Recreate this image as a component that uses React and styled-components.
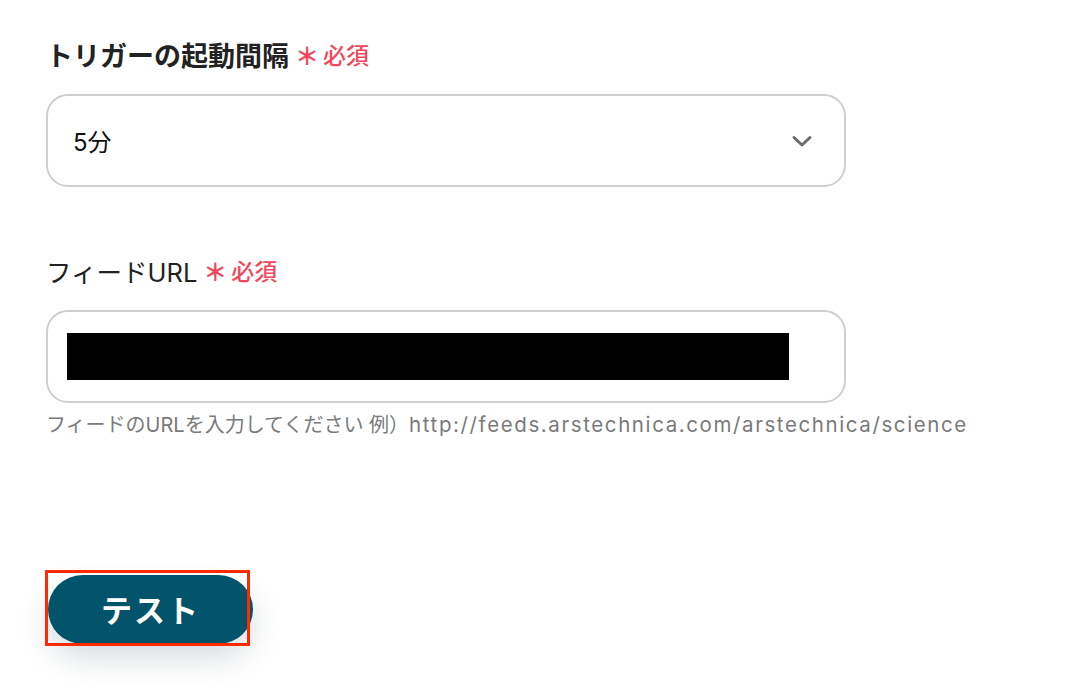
import React from 'react'
import styled, { createGlobalStyle } from 'styled-components'

const GlobalStyle = createGlobalStyle`
  html, body {
    margin: 0;
    background: #fff;
    font-family: Inter, "Noto Sans CJK JP", sans-serif;
    color: #222;
  }
`

const Page = styled.div`
  padding: 36px 0 0 46px;
  width: 1038px;
  height: 656px;
  display: flex;
  flex-direction: column;
  overflow: hidden;
`

const Field = styled.div`
  display: flex;
  flex-direction: column;
  margin-bottom: ${p => p.$gap || 0}px;
`

const Label = styled.div`
  display: flex;
  align-items: center;
  height: 36px;
  font-size: ${p => p.$size || 24}px;
  font-weight: ${p => (p.$bold ? 700 : 400)};
  color: #222;
  margin-bottom: ${p => p.$space || 20}px;
`

const Star = styled.span`
  font-family: "Noto Sans CJK JP", sans-serif;
  color: #f2475c;
  font-size: 24px;
  font-weight: 700;
  margin: 0 4px 0 6px;
`

const Required = styled.span`
  font-family: "Noto Sans CJK JP", sans-serif;
  color: #f2475c;
  font-size: 23px;
  font-weight: 500;
`

const Box = styled.div`
  box-sizing: border-box;
  width: 800px;
  height: 93px;
  border: 2px solid #cfcfcf;
  border-radius: 22px;
  display: flex;
  align-items: center;
  justify-content: space-between;
  padding: 0 30px 0 19px;
`

const Value = styled.span`
  font-size: 24px;
  padding-left: 6px;
  color: #111;
`

const Redacted = styled.div`
  width: 722px;
  height: 47px;
  background: #000;
`

const Hint = styled.div`
  margin-top: 6px;
  font-size: 20px;
  color: #7a7a7a;
  white-space: nowrap;
`

const Example = styled.span`
  letter-spacing: 1.6px;
  font-size: 20.5px;
`

const ButtonWrap = styled.div`
  position: relative;
  margin-top: auto;
  margin-bottom: 48px;
  width: 205px;
`

const TestButton = styled.button`
  margin-left: 2px;
  width: 205px;
  height: 69px;
  border: none;
  border-radius: 35px;
  background: #03546a;
  color: #fff;
  font-family: "Noto Sans CJK JP", sans-serif;
  font-size: 31px;
  font-weight: 700;
  letter-spacing: 2px;
  padding-bottom: 4px;
  box-shadow: 0 14px 30px rgba(40, 60, 80, 0.18);
`

const Highlight = styled.div`
  position: absolute;
  left: -1px;
  top: -5px;
  width: 199px;
  height: 70px;
  border: 3px solid #ff2a00;
  pointer-events: none;
`

const Chevron = () => (
  <svg width="24" height="24" viewBox="0 0 24 24" fill="none">
    <path d="M4 8.5l8 7.5 8-7.5" stroke="#6b6b6b" strokeWidth="3" strokeLinecap="round" strokeLinejoin="round" />
  </svg>
)

export default function App() {
  return (
    <>
      <GlobalStyle />
      <Page>
        <Field $gap={65}>
          <Label $bold $size={27} $space={22}>
            トリガーの起動間隔<Star>＊</Star><Required>必須</Required>
          </Label>
          <Box>
            <Value>5分</Value>
            <Chevron />
          </Box>
        </Field>
        <Field>
          <Label $size={25.5} $space={22}>
            フィードURL<Star>＊</Star><Required>必須</Required>
          </Label>
          <Box>
            <Redacted />
          </Box>
          <Hint>
            フィードのURLを入力してください 例）<Example>http://feeds.arstechnica.com/arstechnica/science</Example>
          </Hint>
        </Field>
        <ButtonWrap>
          <TestButton>テスト</TestButton>
          <Highlight />
        </ButtonWrap>
      </Page>
    </>
  )
}
